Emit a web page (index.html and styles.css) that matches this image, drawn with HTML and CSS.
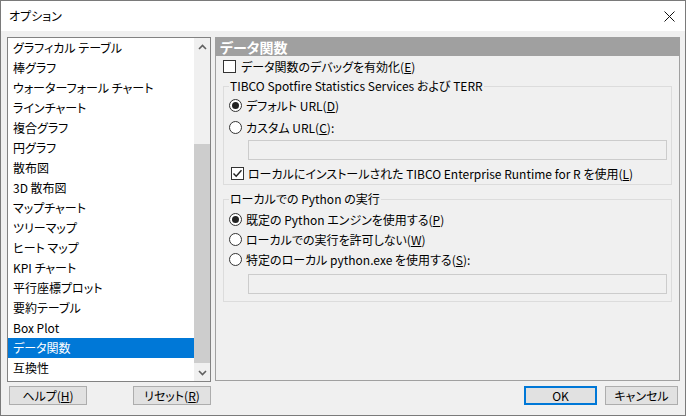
FILE: index.html
```html
<!DOCTYPE html>
<html lang="ja">
<head>
<meta charset="utf-8">
<title>オプション</title>
<link rel="stylesheet" href="styles.css">
</head>
<body>
<div class="window">
  <div class="titlebar">
    <span class="title">オプション</span>
    <svg class="close" width="11" height="11" viewBox="0 0 11 11"><path d="M0.5 0.5 L10.5 10.5 M10.5 0.5 L0.5 10.5" stroke="#111" stroke-width="1" fill="none"/></svg>
  </div>
  <div class="body">
    <div class="main">
      <div class="listbox">
        <ul class="items">
          <li>グラフィカル テーブル</li>
          <li>棒グラフ</li>
          <li>ウォーターフォール チャート</li>
          <li>ラインチャート</li>
          <li>複合グラフ</li>
          <li>円グラフ</li>
          <li>散布図</li>
          <li>3D 散布図</li>
          <li>マップチャート</li>
          <li>ツリーマップ</li>
          <li>ヒート マップ</li>
          <li>KPI チャート</li>
          <li>平行座標プロット</li>
          <li>要約テーブル</li>
          <li>Box Plot</li>
          <li class="selected">データ関数</li>
          <li>互換性</li>
        </ul>
        <div class="scrollbar">
          <div class="arrow"><svg width="9" height="6" viewBox="0 0 9 6"><path d="M1 5 L4.5 1.5 L8 5" stroke="#606060" stroke-width="1.6" fill="none"/></svg></div>
          <div class="track"><div class="thumb"></div></div>
          <div class="arrow"><svg width="9" height="6" viewBox="0 0 9 6"><path d="M1 1 L4.5 4.5 L8 1" stroke="#606060" stroke-width="1.6" fill="none"/></svg></div>
        </div>
      </div>
      <div class="panel">
        <div class="panel-header">データ関数</div>
        <div class="panel-body">
          <div class="row check-row top">
            <span class="box"></span>
            <span class="label">データ関数のデバッグを有効化(<u>E</u>)</span>
          </div>
          <fieldset class="group g1">
            <legend>TIBCO Spotfire Statistics Services および TERR</legend>
            <div class="row radio-row first">
              <span class="radio checked"></span>
              <span class="label">デフォルト URL(<u>D</u>)</span>
            </div>
            <div class="row radio-row second">
              <span class="radio"></span>
              <span class="label">カスタム URL(<u>C</u>):</span>
            </div>
            <div class="textbox tb1"></div>
            <div class="row check-row inner">
              <span class="box checked"><svg width="11" height="11" viewBox="0 0 11 11"><path d="M1.5 5.5 L4.2 8.3 L9.5 2.2" stroke="#222" stroke-width="1.4" fill="none"/></svg></span>
              <span class="label">ローカルにインストールされた TIBCO Enterprise Runtime for R を使用(<u>L</u>)</span>
            </div>
          </fieldset>
          <fieldset class="group g2">
            <legend>ローカルでの Python の実行</legend>
            <div class="row radio-row first">
              <span class="radio checked"></span>
              <span class="label">既定の Python エンジンを使用する(<u>P</u>)</span>
            </div>
            <div class="row radio-row">
              <span class="radio"></span>
              <span class="label">ローカルでの実行を許可しない(<u>W</u>)</span>
            </div>
            <div class="row radio-row">
              <span class="radio"></span>
              <span class="label">特定のローカル python.exe を使用する(<u>S</u>):</span>
            </div>
            <div class="textbox tb2"></div>
          </fieldset>
        </div>
      </div>
    </div>
    <div class="footer">
      <div class="btn help">ヘルプ(<u>H</u>)</div>
      <div class="btn reset">リセット(<u>R</u>)</div>
      <div class="spacer"></div>
      <div class="btn ok">OK</div>
      <div class="btn cancel">キャンセル</div>
    </div>
  </div>
</div>
</body>
</html>
```

FILE: styles.css
```css
html, body {
  margin: 0;
  padding: 0;
}
body {
  width: 686px;
  height: 416px;
  overflow: hidden;
  font-family: "Noto Sans CJK JP", "Noto Sans", sans-serif;
  font-size: 12px;
  font-feature-settings: "palt";
  color: #000;
}
.window {
  box-sizing: border-box;
  width: 686px;
  height: 416px;
  border: 1px solid #7a7a7a;
  display: flex;
  flex-direction: column;
  background: #f0f0f0;
}
.titlebar {
  flex: none;
  height: 30px;
  background: #fff;
  display: flex;
  align-items: center;
  justify-content: space-between;
  padding: 0 10px 0 8px;
}
.title {
  font-size: 12px;
  line-height: 14px;
}
.close {
  display: block;
}
.body {
  flex: 1;
  padding: 6px 5px 0 6px;
  display: flex;
  flex-direction: column;
}
.main {
  display: flex;
  gap: 4px;
  height: 345px;
  flex: none;
}
.listbox {
  box-sizing: border-box;
  width: 204px;
  height: 345px;
  border: 1px solid #828282;
  background: #fff;
  display: flex;
}
.items {
  list-style: none;
  margin: 0;
  padding: 0;
  width: 186px;
}
.items li {
  height: 20px;
  line-height: 20px;
  padding-left: 5px;
  white-space: nowrap;
}
.items li.selected {
  background: #0078d7;
  color: #fff;
}
.scrollbar {
  width: 16px;
  background: #f0f0f0;
  display: flex;
  flex-direction: column;
}
.arrow {
  height: 17px;
  display: flex;
  align-items: center;
  justify-content: center;
  flex: none;
}
.arrow svg {
  display: block;
}
.track {
  flex: 1;
}
.thumb {
  margin: 89px 0 0 0;
  height: 219px;
  background: #cdcdcd;
}
.panel {
  box-sizing: border-box;
  width: 465px;
  height: 344px;
  border: 1px solid #a0a0a0;
}
.panel-header {
  height: 18px;
  background: #a0a0a0;
  color: #fff;
  font-weight: bold;
  font-size: 14px;
  line-height: 18px;
  padding-left: 4px;
}
.panel-body {
  padding: 0 6px 0 7px;
}
.row {
  display: flex;
  align-items: center;
  height: 20px;
  white-space: nowrap;
}
.box {
  box-sizing: border-box;
  width: 13px;
  height: 13px;
  border: 1px solid #333;
  background: #fff;
  flex: none;
  display: flex;
  align-items: center;
  justify-content: center;
}
.box svg {
  display: block;
}
.check-row.top .label {
  margin-left: 5px;
}
.radio {
  box-sizing: border-box;
  width: 13px;
  height: 13px;
  border: 1px solid #333;
  border-radius: 50%;
  background: #fff;
  flex: none;
  display: flex;
  align-items: center;
  justify-content: center;
}
.radio.checked::after {
  content: "";
  width: 7px;
  height: 7px;
  border-radius: 50%;
  background: #222;
}
.radio-row {
  padding-left: 5px;
}
.radio-row .label {
  margin-left: 4px;
}
.group {
  margin: 3px 0 0 0;
  padding: 0;
  width: 449px;
  box-sizing: border-box;
  border: 1px solid #dcdcdc;
  min-width: 0;
}
.group legend {
  margin-left: 5px;
  padding: 0 1px;
  line-height: 14px;
  font-size: 12px;
}
.g1 .first {
  margin-top: 2px;
}
.g1 .second {
  margin-top: 2px;
}
.textbox {
  box-sizing: border-box;
  margin-left: 24px;
  width: 419px;
  height: 20px;
  border: 1px solid #cccccc;
  background: #f0f0f0;
}
.tb1 {
  margin-top: 3px;
}
.check-row.inner {
  margin-top: 3px;
  padding-left: 7px;
  margin-bottom: 1px;
}
.check-row.inner .label {
  margin-left: 4px;
}
.g2 {
  margin-top: 7px;
  padding-bottom: 7px;
}
.g2 .first {
  margin-top: 3px;
}
.tb2 {
  margin-top: 5px;
}
.footer {
  display: flex;
  align-items: center;
  margin-top: 4px;
  padding-left: 2px;
  padding-right: 2px;
}
.btn {
  box-sizing: border-box;
  height: 19px;
  border: 1px solid #adadad;
  background: #e1e1e1;
  display: flex;
  align-items: center;
  justify-content: center;
  font-size: 12px;
  line-height: 14px;
}
.help {
  width: 78px;
}
.reset {
  width: 78px;
  margin-left: 46px;
}
.spacer {
  flex: 1;
}
.ok {
  width: 73px;
  border: 2px solid #0078d7;
}
.cancel {
  width: 73px;
  margin-left: 8px;
}
```
